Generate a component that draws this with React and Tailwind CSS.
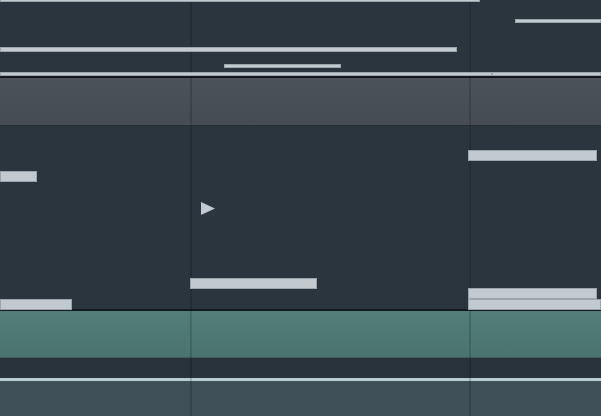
export default function App() {
  const Note = ({ x, y, w, h }) => (
    <div
      className="absolute z-10 bg-[#c2cad0] shadow-[inset_0_0_0_1px_#9aa4ab]"
      style={{ left: x, top: y, width: w, height: h }}
    />
  );
  return (
    <div className="relative w-[601px] h-[416px] overflow-hidden bg-[#2a353e] flex flex-col">
      {/* top note area */}
      <div className="relative h-[76px] shrink-0 bg-[#2a353e]">
        <Note x={0} y={-1} w={480} h={3} />
        <Note x={515} y={19} w={86} h={4} />
        <Note x={0} y={47} w={457} h={5} />
        <Note x={224} y={64} w={117} h={4} />
        <Note x={0} y={72} w={492} h={4} />
        <Note x={492} y={72} w={109} h={4} />
      </div>
      <div className="h-[2px] shrink-0 bg-[#15191d]" />
      <div className="h-[47px] shrink-0 bg-gradient-to-b from-[#4c525a] to-[#464c54]" />
      <div className="relative h-[184px] shrink-0 bg-[#2a353e] border-t border-[#262f36]">
        <Note x={0} y={45} w={37} h={11} />
        <Note x={468} y={24} w={129} h={11} />
        <Note x={190} y={152} w={127} h={11} />
        <Note x={0} y={173} w={72} h={11} />
        <Note x={468} y={162} w={129} h={11} />
        <Note x={468} y={173} w={133} h={11} />
        <svg className="absolute z-10 left-[200px] top-[75px]" width="16" height="15" viewBox="0 0 16 15">
          <polygon points="1,1 15,7.5 1,14" fill="#c2cad0" />
        </svg>
      </div>
      <div className="h-[2px] shrink-0 bg-[#141a1d]" />
      <div className="h-[47px] shrink-0 bg-gradient-to-b from-[#527d79] to-[#4b7470] border-b border-[#3f615e]" />
      <div className="h-[20px] shrink-0 bg-[#28333b]" />
      <div className="h-[3px] shrink-0 bg-[#b6cdd2]" />
      <div className="flex-1 bg-[#3f5058]" />
      {/* vertical grid lines */}
      <div className="pointer-events-none absolute inset-y-0 left-[190px] w-[2px] bg-black/15" />
      <div className="pointer-events-none absolute inset-y-0 left-[469px] w-[2px] bg-black/15" />
    </div>
  );
}
